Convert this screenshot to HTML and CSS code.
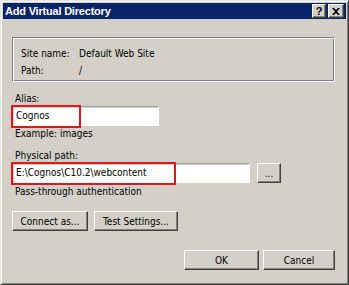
FILE: index.html
```html
<!DOCTYPE html>
<html>
<head>
<meta charset="utf-8">
<link rel="stylesheet" href="styles.css">
</head>
<body>
<div class="window">
  <div class="titlebar">
    <span class="title">Add Virtual Directory</span>
    <div class="tbtns">
      <span class="tbtn help">?</span>
      <span class="tbtn close">
        <svg width="8" height="7" viewBox="0 0 8 7"><path d="M0 0h2l2 2 2-2h2L5 3.5 8 7H6L4 5 2 7H0l3-3.5z" fill="#000"/></svg>
      </span>
    </div>
  </div>
  <div class="content">
    <div class="group">
      <span class="lbl">Site name:</span><span>Default Web Site</span>
      <span class="lbl">Path:</span><span>/</span>
    </div>
    <div class="field-label alias-label">Alias:</div>
    <div class="hl-wrap">
      <div class="textbox alias">Cognos</div>
      <div class="hl hl-alias"></div>
    </div>
    <div class="hint">Example: images</div>
    <div class="field-label path-label">Physical path:</div>
    <div class="path-row">
      <div class="hl-wrap">
        <div class="textbox path">E:\Cognos\C10.2\webcontent</div>
        <div class="hl hl-path"></div>
      </div>
      <div class="btn browse">...</div>
    </div>
    <div class="hint pass">Pass-through authentication</div>
    <div class="btn-row">
      <div class="btn connect">Connect as...</div>
      <div class="btn test">Test Settings...</div>
    </div>
    <div class="btn-row footer">
      <div class="btn ok">OK</div>
      <div class="btn cancel">Cancel</div>
    </div>
  </div>
</div>
</body>
</html>
```

FILE: styles.css
```css
html, body {
  margin: 0;
  padding: 0;
  background: #d4d0c8;
}
.window {
  width: 349px;
  height: 285px;
  box-sizing: border-box;
  border: 1px solid;
  border-color: #e6e4de #404040 #404040 #e6e4de;
  box-shadow: inset 1px 1px #ffffff, inset -1px -1px #808080;
  padding: 2px;
  background: #d4d0c8;
  font-family: "DejaVu Sans Condensed", "DejaVu Sans", sans-serif;
  font-size: 10px;
  color: #000;
}
.titlebar {
  height: 16px;
  background: #0a246a;
  display: flex;
  align-items: center;
  justify-content: space-between;
  padding: 0 2px 0 2px;
}
.title {
  color: #fff;
  font-family: "Liberation Sans", Arial, sans-serif;
  font-weight: bold;
  font-size: 11px;
  letter-spacing: -0.2px;
  line-height: 16px;
}
.tbtns {
  display: flex;
  gap: 2px;
}
.tbtn {
  width: 14px;
  height: 14px;
  box-sizing: border-box;
  background: #d4d0c8;
  border: 1px solid;
  border-color: #ffffff #404040 #404040 #ffffff;
  box-shadow: inset -1px -1px #808080;
  display: flex;
  align-items: center;
  justify-content: center;
  font-family: "Liberation Sans", Arial, sans-serif;
  font-weight: bold;
  font-size: 11px;
  line-height: 11px;
}
.tbtn.close {
  width: 16px;
}
.content {
  padding: 18px 11px 0 9px;
}
.group {
  height: 45px;
  box-sizing: border-box;
  border: 1px solid;
  border-color: #808080 #ffffff #ffffff #808080;
  box-shadow: inset 1px 1px #ffffff, inset -1px -1px #808080;
  display: grid;
  grid-template-columns: 58px auto;
  row-gap: 4px;
  padding: 9px 0 0 8px;
  line-height: 13px;
  align-content: start;
}
.field-label, .hint {
  line-height: 13px;
  padding-left: 3px;
}
.alias-label {
  margin-top: 10px;
}
.hl-wrap {
  position: relative;
}
.textbox {
  height: 20px;
  box-sizing: border-box;
  background: #fff;
  border: 1px solid;
  border-color: #a0a0a0 #ffffff #ffffff #a0a0a0;
  box-shadow: inset 1px 1px #d4d0c8;
  padding: 0 3px;
  line-height: 18px;
  white-space: nowrap;
}
.textbox.alias {
  width: 147px;
  margin-top: 1px;
}
.textbox.path {
  width: 238px;
}
.hl {
  position: absolute;
  border: 2px solid #e8141b;
  box-sizing: border-box;
}
.hl-alias {
  left: -1px;
  top: -1px;
  width: 70px;
  height: 23px;
}
.hl-path {
  left: -1px;
  top: -1px;
  width: 165px;
  height: 23px;
}
.hint {
  margin-top: 1px;
}
.path-label {
  margin-top: 9px;
}
.path-row {
  display: flex;
  gap: 7px;
  margin-top: 1px;
}
.btn {
  height: 20px;
  box-sizing: border-box;
  border: 1px solid;
  border-color: #ffffff #404040 #404040 #ffffff;
  box-shadow: inset -1px -1px #808080;
  background: #d4d0c8;
  display: flex;
  align-items: center;
  justify-content: center;
  white-space: nowrap;
}
.btn.browse {
  width: 24px;
}
.pass {
  margin-top: 2px;
}
.btn-row {
  display: flex;
  gap: 6px;
  margin-top: 13px;
}
.btn.connect { width: 76px; }
.btn.test { width: 84px; }
.footer {
  justify-content: flex-end;
  gap: 4px;
  margin-top: 19px;
}
.btn.ok { width: 75px; }
.btn.cancel { width: 72px; }
```
